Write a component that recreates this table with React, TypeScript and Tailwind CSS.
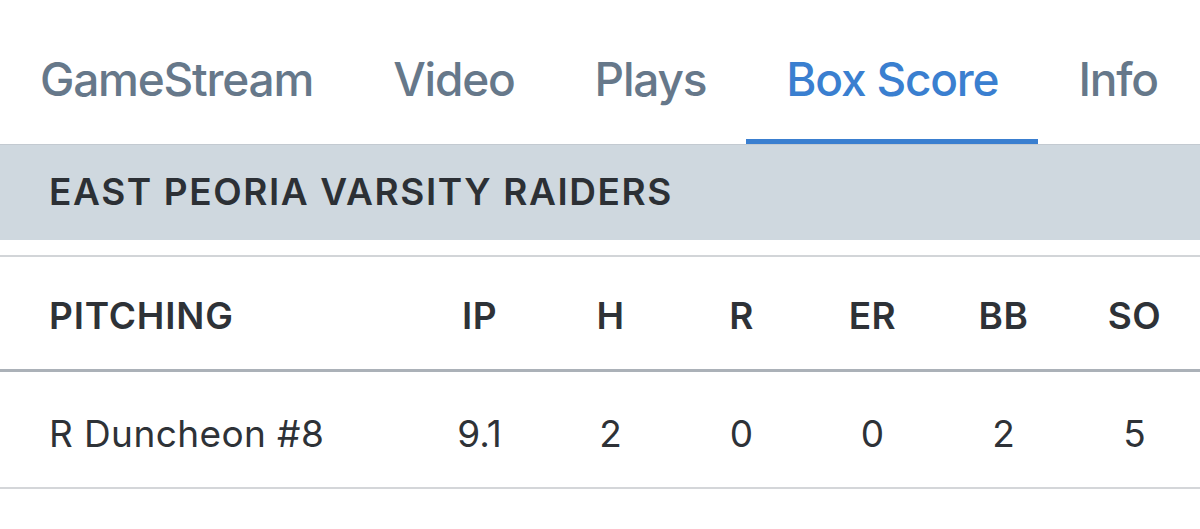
const tabs = ["GameStream", "Video", "Plays", "Box Score", "Info"];
const active = "Box Score";

const cols = ["IP", "H", "R", "ER", "BB", "SO"];
const pitchers = [{ name: "R Duncheon #8", stats: ["9.1", "2", "0", "0", "2", "5"] }];

export default function App() {
  return (
    <div className="w-[1200px] h-[529px] bg-white overflow-hidden font-['Inter',sans-serif] text-[#2e3237]">
      {/* Tabs */}
      <nav className="flex h-[145px] border-b border-[#c3cad1]">
        {tabs.map((t) => (
          <div
            key={t}
            className={
              "relative shrink-0 whitespace-nowrap flex items-center justify-center px-[40px] pt-[14px] text-[46px] font-medium tracking-[-1.2px] " +
              (t === active ? "text-[#3a7fd0]" : "text-[#66788a]")
            }
          >
            {t}
            {t === active && <span className="absolute left-0 right-0 bottom-0 h-[5px] bg-[#3a7fd0]" />}
          </div>
        ))}
      </nav>

      {/* Team header */}
      <div className="h-[95px] bg-[#cfd8df] flex items-center pl-[49px] pb-[2px] text-[37px] font-semibold tracking-[1.6px] text-[#2c3035]">
        EAST PEORIA VARSITY RAIDERS
      </div>

      <div className="h-[15px]" />

      {/* Pitching table */}
      <div className="border-t-2 border-[#d2d5d8]">
        <div className="grid grid-cols-[414px_repeat(6,131px)] h-[115px] pt-[5px] items-center border-b-[3px] border-[#abb1b8] text-[37px] font-semibold">
          <div className="pl-[49px] tracking-[0.8px]">PITCHING</div>
          {cols.map((c) => (
            <div key={c} className="text-center tracking-[0.5px]">{c}</div>
          ))}
        </div>
        {pitchers.map((p) => (
          <div
            key={p.name}
            className="grid grid-cols-[414px_repeat(6,131px)] h-[117px] pt-[9px] items-center border-b-2 border-[#d4d6d9] text-[37px]"
          >
            <div className="pl-[49px] tracking-[0.4px]">{p.name}</div>
            {p.stats.map((s, i) => (
              <div key={i} className="text-center">{s}</div>
            ))}
          </div>
        ))}
      </div>
    </div>
  );
}
